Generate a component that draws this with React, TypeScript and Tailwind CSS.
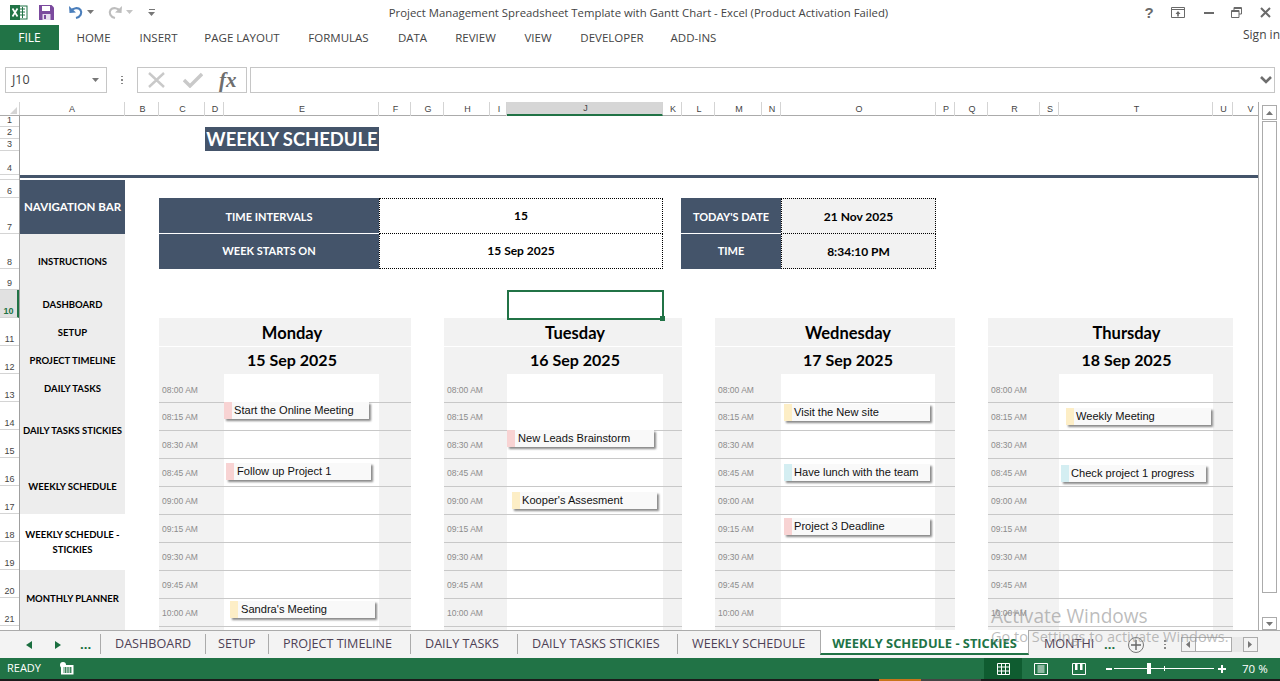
const COLS =
  "grid grid-cols-[105px_34px_46px_19px_155px_32px_33px_46px_17px_156px_19px_33px_47px_19px_155px_19px_33px_52px_19px_154px_20px_25px]";
const ROWS = "grid-rows-[11px_12px_12px_24px_5px_18px_36px_35px_21px_repeat(13,28px)]";

const columnLetters = "ABCDEFGHIJKLMNOPQRSTUV".split("");
const rowNumbers = Array.from({ length: 22 }, (_, i) => i + 1);
const times = [
  "08:00 AM", "08:15 AM", "08:30 AM", "08:45 AM", "09:00 AM",
  "09:15 AM", "09:30 AM", "09:45 AM", "10:00 AM", "10:15 AM",
];

const ribbonTabs = [
  { label: "HOME", cls: "w-[65px]" },
  { label: "INSERT", cls: "w-[65px]" },
  { label: "PAGE LAYOUT", cls: "w-[102px]" },
  { label: "FORMULAS", cls: "w-[91px]" },
  { label: "DATA", cls: "w-[57px]" },
  { label: "REVIEW", cls: "w-[69px]" },
  { label: "VIEW", cls: "w-[56px]" },
  { label: "DEVELOPER", cls: "w-[92px]" },
  { label: "ADD-INS", cls: "w-[71px]" },
];

const sheetTabs = [
  { label: "DASHBOARD", cls: "w-[105px] pl-[14px]" },
  { label: "SETUP", cls: "w-[63px] pl-[12px]" },
  { label: "PROJECT TIMELINE", cls: "w-[142px] pl-[14px]" },
  { label: "DAILY TASKS", cls: "w-[107px] pl-[14px]" },
  { label: "DAILY TASKS STICKIES", cls: "w-[160px] pl-[14px]" },
  { label: "WEEKLY SCHEDULE", cls: "w-[143px] pl-[14px]" },
];

const navItems = [
  { label: "INSTRUCTIONS", cls: "row-[8/10] bg-[#ededed]" },
  { label: "DASHBOARD", cls: "row-[10/11] bg-[#ededed] pt-[2px]" },
  { label: "SETUP", cls: "row-[11/12] bg-[#ededed] pt-[2px]" },
  { label: "PROJECT TIMELINE", cls: "row-[12/13] bg-[#ededed] pt-[2px]" },
  { label: "DAILY TASKS", cls: "row-[13/14] bg-[#ededed] pt-[2px]" },
  { label: "DAILY TASKS STICKIES", cls: "row-[14/16] bg-[#ededed] pt-[2px]" },
  { label: "WEEKLY SCHEDULE", cls: "row-[16/18] bg-[#ededed] pt-[2px]" },
  { label: "WEEKLY SCHEDULE - STICKIES", cls: "row-[18/20] bg-white leading-[15px] px-[4px]" },
  { label: "MONTHLY PLANNER", cls: "row-[20/22] bg-[#ededed] pt-[2px]" },
];

const PINK = "bg-[#f8d3d3]";
const YELLOW = "bg-[#fdeec6]";
const TEAL = "bg-[#d4eef2]";

const days = [
  {
    name: "Monday", date: "15 Sep 2025", place: "col-[3/7]", head: "pl-[14px]", gutter: "w-[65px]", body: "w-[155px]",
    notes: [
      { text: "Start the Online Meeting", pos: "left-[65px] top-[28px] w-[145px]", color: PINK, pad: "pl-[2px]" },
      { text: "Follow up Project 1", pos: "left-[67px] top-[89px] w-[145px]", color: PINK, pad: "pl-[3px]" },
      { text: "Sandra's Meeting", pos: "left-[71px] top-[227px] w-[145px]", color: YELLOW, pad: "pl-[3px]" },
    ],
  },
  {
    name: "Tuesday", date: "16 Sep 2025", place: "col-[8/12]", head: "pl-[24px]", gutter: "w-[63px]", body: "w-[156px]",
    notes: [
      { text: "New Leads Brainstorm", pos: "left-[63px] top-[56px] w-[147px]", color: PINK, pad: "pl-[3px]" },
      { text: "Kooper's Assesment", pos: "left-[68px] top-[118px] w-[145px]", color: YELLOW, pad: "pl-[2px]" },
    ],
  },
  {
    name: "Wednesday", date: "17 Sep 2025", place: "col-[13/17]", head: "pl-[26px]", gutter: "w-[66px]", body: "w-[154px]",
    notes: [
      { text: "Visit the New site", pos: "left-[69px] top-[30px] w-[146px]", color: YELLOW, pad: "pl-[2px]" },
      { text: "Have lunch with the team", pos: "left-[69px] top-[90px] w-[146px]", color: TEAL, pad: "pl-[2px]" },
      { text: "Project 3 Deadline", pos: "left-[69px] top-[144px] w-[146px]", color: PINK, pad: "pl-[2px]" },
    ],
  },
  {
    name: "Thursday", date: "18 Sep 2025", place: "col-[18/22]", head: "pl-[32px]", gutter: "w-[71px]", body: "w-[154px]",
    notes: [
      { text: "Weekly Meeting", pos: "left-[78px] top-[34px] w-[145px]", color: YELLOW, pad: "pl-[2px]" },
      { text: "Check project 1 progress", pos: "left-[73px] top-[91px] w-[145px]", color: TEAL, pad: "pl-[2px]" },
    ],
  },
];

const ExcelLogo = () => (
  <svg width="18" height="17" viewBox="0 0 18 17">
    <rect x="8" y="2" width="9" height="13" fill="#fff" stroke="#217346" />
    <path d="M10 5h5M10 8h5M10 11h5M12.5 3v11" stroke="#217346" strokeWidth="1" />
    <rect x="0" y="1" width="10" height="15" fill="#217346" />
    <path d="M2.5 4.5 L7.5 12.5 M7.5 4.5 L2.5 12.5" stroke="#fff" strokeWidth="1.7" />
  </svg>
);

const SaveIcon = () => (
  <svg width="15" height="15" viewBox="0 0 15 15">
    <path d="M0 0h12.5L15 2.5V15H0z" fill="#7b4a9e" />
    <rect x="3" y="1" width="8" height="5" fill="#fff" />
    <rect x="3.5" y="9" width="8" height="6" fill="#e6dcee" />
    <rect x="5" y="10" width="2" height="4" fill="#7b4a9e" />
  </svg>
);

const Undo = ({ color, flip }: { color: string; flip?: boolean }) => (
  <svg width="16" height="15" viewBox="0 0 16 15" className={flip ? "-scale-x-100" : ""}>
    <path d="M3 6 C5 3 10 2 12.5 5 C14.5 8 12.5 12 8 13" fill="none" stroke={color} strokeWidth="2.2" />
    <path d="M1 1 L1.5 8 L8 7.5 z" fill={color} />
  </svg>
);

const Caret = ({ color = "#777" }: { color?: string }) => (
  <svg width="7" height="4" viewBox="0 0 7 4">
    <path d="M0 0h7L3.5 4z" fill={color} />
  </svg>
);

const WindowButtons = () => (
  <div className="flex items-center text-[#6a6a6a]">
    <span className="w-[14px] text-center text-[15px] font-bold leading-none font-['Liberation_Sans',sans-serif]">?</span>
    <svg width="14" height="11" viewBox="0 0 14 11" className="ml-[15px]">
      <path d="M.5.5h13v10H.5z M.5 2.5h13" fill="none" stroke="#6a6a6a" />
      <path d="M7 4 L4.5 7h1.7v2.5h1.6V7h1.7z" fill="#6a6a6a" />
    </svg>
    <div className="ml-[19px] h-[2px] w-[10px] bg-[#6a6a6a]" />
    <svg width="11" height="11" viewBox="0 0 11 11" className="ml-[17px]">
      <path d="M3 3V.5h7.5V7H8 M.5 3.5H8v7H.5z M.5 4.5H8 M3 1.5h7.5" fill="none" stroke="#6a6a6a" />
    </svg>
    <svg width="11" height="11" viewBox="0 0 11 11" className="ml-[18px]">
      <path d="M1 1l9 9M10 1l-9 9" stroke="#6a6a6a" strokeWidth="2" />
    </svg>
  </div>
);

const TitleBar = () => (
  <div className="relative flex h-[25px] items-center pl-[10px]">
    <ExcelLogo />
    <div className="ml-[11px]"><SaveIcon /></div>
    <div className="ml-[14px]"><Undo color="#4a7ebb" /></div>
    <div className="ml-[3px] mb-[2px]"><Caret /></div>
    <div className="ml-[13px]"><Undo color="#bdbdbd" flip /></div>
    <div className="ml-[3px] mb-[2px]"><Caret color="#c4c4c4" /></div>
    <div className="ml-[15px] flex flex-col items-center gap-[2px]">
      <div className="h-[1px] w-[6px] bg-[#777]" />
      <Caret />
    </div>
    <div className="ml-[233px] w-[501px] whitespace-nowrap text-center text-[11.35px] text-[#444]">
      Project Management Spreadsheet Template with Gantt Chart - Excel (Product Activation Failed)
    </div>
    <div className="ml-auto pr-[9px]"><WindowButtons /></div>
  </div>
);

const RibbonTabs = () => (
  <div className="flex h-[25px] items-center">
    <div className="mr-[2px] flex h-full w-[59px] items-center justify-center bg-[#217346] text-[12px] text-white">FILE</div>
    {ribbonTabs.map((t) => (
      <div key={t.label} className={`${t.cls} whitespace-nowrap text-center text-[11.5px] text-[#444]`}>{t.label}</div>
    ))}
    <div className="ml-auto pb-[6px] text-[12px] text-[#444]">Sign in</div>
  </div>
);

const FormulaBar = () => (
  <div className="mt-[17px] flex h-[26px] pl-[5px] pr-[5px]">
    <div className="flex w-[102px] items-center justify-between border border-[#c6c6c6] pl-[6px] pr-[7px] text-[12.5px] text-[#444]">
      J10
      <Caret color="#777" />
    </div>
    <div className="flex w-[30px] items-center justify-center text-[#999]">
      <div className="flex flex-col gap-[2px]">
        <div className="size-[1.5px] bg-[#888]" />
        <div className="size-[1.5px] bg-[#888]" />
        <div className="size-[1.5px] bg-[#888]" />
      </div>
    </div>
    <div className="flex w-[110px] items-center border border-[#c6c6c6] pl-[10px]">
      <svg width="17" height="16" viewBox="0 0 17 16">
        <path d="M1 1l15 14M16 1L1 15" stroke="#c9c9c9" strokeWidth="2.4" />
      </svg>
      <svg width="20" height="16" viewBox="0 0 20 16" className="ml-[18px]">
        <path d="M1 8l6 6L19 2" fill="none" stroke="#c9c9c9" strokeWidth="3.4" />
      </svg>
      <span className="ml-[16px] font-['Liberation_Serif',serif] text-[21px] font-bold italic leading-none text-[#6e6e6e]">fx</span>
    </div>
    <div className="ml-[3px] flex flex-1 items-center justify-end border border-[#c6c6c6] pr-[2px]">
      <svg width="12" height="8" viewBox="0 0 12 8">
        <path d="M1 1l5 5 5-5" fill="none" stroke="#6e6e6e" strokeWidth="2.6" />
      </svg>
    </div>
  </div>
);

const ColumnHeader = () => (
  <div className="flex h-[14px] border-b border-[#ababab]">
    <div className="relative w-[20px] border-r border-[#d4d4d4]">
      <svg width="7" height="7" viewBox="0 0 7 7" className="absolute bottom-[1px] right-[2px]">
        <path d="M7 0v7H0z" fill="#d4d4d4" />
      </svg>
    </div>
    <div className={`${COLS} flex-1`}>
      {columnLetters.map((c) => (
        <div
          key={c}
          className={`flex items-center justify-center border-r border-[#d4d4d4] text-[9px] leading-none text-[#444] font-['Liberation_Sans',sans-serif] ${
            c === "A" ? "" : c === "V" ? "pl-[10px]" : "pl-[2px]"
          } ${c === "V" ? "border-r-0" : ""} ${c === "J" ? "h-[14px] border-b-2 border-b-[#217346] bg-[#d6d6d6]" : ""}`}
        >
          {c}
        </div>
      ))}
    </div>
  </div>
);

const RowHeader = () => (
  <div className={`grid w-[20px] shrink-0 ${ROWS} border-r border-[#9f9f9f] font-['Liberation_Sans',sans-serif]`}>
    {rowNumbers.map((n) => (
      <div
        key={n}
        className={`flex items-end justify-center border-b border-[#d4d4d4] text-[9px] leading-[11px] ${
          n === 5 ? "overflow-hidden text-transparent" : "text-[#444]"
        } ${n === 10 ? "border-r-2 border-r-[#217346] bg-[#e1e1e1] font-bold text-[#217346]" : ""}`}
      >
        {n}
      </div>
    ))}
  </div>
);

const Sticky = ({ note }: { note: (typeof days)[number]["notes"][number] }) => (
  <div className={`absolute ${note.pos} flex h-[17px] items-center bg-[#f9f9f9] shadow-[2px_2px_2px_#8a8a8a]`}>
    <div className={`h-full w-[8px] shrink-0 ${note.color}`} />
    <span className={`${note.pad} whitespace-nowrap font-['Liberation_Sans',sans-serif] text-[11.1px] text-[#111]`}>{note.text}</span>
  </div>
);

const DayColumn = ({ day }: { day: (typeof days)[number] }) => (
  <div className={`${day.place} row-[11/23] flex flex-col font-['Lato',sans-serif]`}>
    <div className={`${day.head} flex h-[28px] shrink-0 items-center justify-center bg-[#f2f2f2] pt-[3px] text-[16.5px] font-bold text-black`}>{day.name}</div>
    <div className={`${day.head} flex h-[28px] shrink-0 items-center justify-center border-t border-white bg-[#f2f2f2] pb-[2px] text-[16px] font-bold text-black`}>{day.date}</div>
    <div className="relative">
      {times.map((t, i) => (
        <div key={t} className={`flex h-[28px] bg-[#f2f2f2] ${i > 0 ? "border-t border-[#c8c8c8]" : ""}`}>
          <div className={`${day.gutter} ${i > 0 ? "pt-[2px]" : "pt-[4px]"} flex items-center pl-[3px] font-['Liberation_Sans',sans-serif] text-[8.5px] text-[#8c8c8c]`}>{t}</div>
          <div className={`${day.body} bg-white`} />
        </div>
      ))}
      {day.notes.map((n) => (
        <Sticky key={n.text} note={n} />
      ))}
    </div>
  </div>
);

const labelCell = "flex items-center justify-center whitespace-nowrap bg-[#44546a] text-[11px] font-bold text-white";
const valueCell = "flex items-center justify-center border-black border-dotted text-[12px] font-bold text-black";

const SheetBody = () => (
  <div className={`${COLS} ${ROWS} relative flex-1 bg-white font-['Lato',sans-serif]`}>
    <div className="col-[4/6] row-[2/4] flex items-center justify-center whitespace-nowrap bg-[#44546a] text-[18.4px] font-bold leading-none text-white">WEEKLY SCHEDULE</div>
    <div className="col-[1/-1] row-[5/6] h-[3px] bg-[#44546a]" />

    <div className="col-[1/2] row-[6/8] flex items-center justify-center whitespace-nowrap bg-[#44546a] pb-[1px] text-[11.5px] font-bold text-white">NAVIGATION BAR</div>
    {navItems.map((n) => (
      <div key={n.label} className={`col-[1/2] ${n.cls} flex items-center justify-center text-center text-[9.5px] font-bold text-black`}>{n.label}</div>
    ))}
    <div className="col-[1/2] row-[22/23] bg-[#ededed]" />

    <div className={`col-[3/6] row-[7/8] mb-[1px] pt-[3px] ${labelCell}`}>TIME INTERVALS</div>
    <div className={`col-[3/6] row-[8/9] ${labelCell} pb-[1px]`}>WEEK STARTS ON</div>
    <div className={`col-[6/11] row-[7/8] border ${valueCell}`}>15</div>
    <div className={`col-[6/11] row-[8/9] border-x border-b ${valueCell}`}>15 Sep 2025</div>

    <div className={`col-[12/15] row-[7/8] -ml-[1px] mb-[1px] pt-[3px] ${labelCell}`}>TODAY'S DATE</div>
    <div className={`col-[12/15] row-[8/9] -ml-[1px] ${labelCell}`}>TIME</div>
    <div className={`col-[15/16] row-[7/8] border bg-[#f2f2f2] pt-[1px] ${valueCell}`}>21 Nov 2025</div>
    <div className={`col-[15/16] row-[8/9] border-x border-b bg-[#f2f2f2] pt-[1px] ${valueCell}`}>8:34:10 PM</div>

    {days.map((d) => (
      <DayColumn key={d.name} day={d} />
    ))}

    <div className="relative col-[10/11] row-[10/11] z-10 -mr-[1px] -mb-[2px] border-2 border-[#217346]">
      <div className="absolute -bottom-[3px] -right-[3px] size-[5px] bg-[#217346]" />
    </div>
  </div>
);

const VerticalScroll = () => (
  <div className="flex w-[21px] flex-col pl-[3px] pr-[3px] pt-[3px]">
    <div className="flex h-[15px] items-center justify-center border border-[#ababab]">
      <svg width="7" height="4" viewBox="0 0 7 4"><path d="M0 4h7L3.5 0z" fill="#777" /></svg>
    </div>
    <div className="mt-[1px] h-[472px] border border-[#ababab]" />
    <div className="mt-auto flex h-[13px] items-center justify-center border border-[#ababab]">
      <Caret />
    </div>
  </div>
);

const SheetTabs = () => (
  <div className="flex h-[28px] bg-[#f3f3f3] text-[12.6px] text-[#4e4155]">
    <div className="flex w-[100px] items-center border-t border-[#ababab] pl-[26px] text-[#0e6b38]">
      <svg width="6" height="8" viewBox="0 0 6 8"><path d="M6 0v8L0 4z" fill="#1a6e3f" /></svg>
      <svg width="6" height="8" viewBox="0 0 6 8" className="ml-[23px]"><path d="M0 0v8l6-4z" fill="#1a6e3f" /></svg>
      <span className="ml-[19px] text-[13px] font-bold leading-none">...</span>
    </div>
    {sheetTabs.map((t) => (
      <div key={t.label} className="border-t border-[#ababab]">
        <div className={`${t.cls} mt-[3px] flex h-[20px] items-center whitespace-nowrap border-l border-[#ababab]`}>{t.label}</div>
      </div>
    ))}
    <div className="flex h-[25px] w-[209px] items-center justify-center whitespace-nowrap border-x border-b-2 border-x-[#ababab] border-b-[#217346] bg-white pt-[4px] text-[12.85px] font-bold text-[#217346]">
      WEEKLY SCHEDULE - STICKIES
    </div>
    <div className="flex flex-1 items-center border-t border-[#ababab] pl-[15px]">
      <span className="w-[52px] overflow-hidden whitespace-nowrap">MONTHI</span>
      <span className="ml-[8px] w-[12px] text-[13px] font-bold leading-none text-[#1a6e3f]">...</span>
      <div className="ml-[12px] flex size-[16px] items-center justify-center rounded-full border border-[#777]">
        <svg width="10" height="10" viewBox="0 0 10 10"><path d="M5 0v10M0 5h10" stroke="#666" strokeWidth="1.4" /></svg>
      </div>
      <div className="ml-[20px] flex flex-col gap-[2px]">
        <div className="size-[1.5px] bg-[#888]" />
        <div className="size-[1.5px] bg-[#888]" />
        <div className="size-[1.5px] bg-[#888]" />
      </div>
      <div className="ml-[15px] flex h-[15px] w-[77px] items-stretch bg-[#e8e8e8]">
        <div className="flex w-[15px] items-center justify-center border border-[#ababab] bg-[#f3f3f3]">
          <svg width="4" height="7" viewBox="0 0 4 7"><path d="M4 0v7L0 3.5z" fill="#777" /></svg>
        </div>
        <div className="w-[36px] border-y border-r border-[#ababab] bg-white" />
        <div className="ml-auto flex w-[15px] items-center justify-center border border-[#ababab] bg-[#f3f3f3]">
          <svg width="4" height="7" viewBox="0 0 4 7"><path d="M0 0v7l4-3.5z" fill="#777" /></svg>
        </div>
      </div>
    </div>
  </div>
);

const StatusBar = () => (
  <div className="flex h-[21px] items-center bg-[#217346] pl-[7px] text-[11px] text-white">
    <span className="w-[53px]">READY</span>
    <svg width="14" height="13" viewBox="0 0 14 13">
      <circle cx="3" cy="3" r="3" fill="#fff" />
      <rect x="1" y="3" width="12.5" height="9.5" fill="#fff" />
      <path d="M3 6h9M3 8h9M3 10h9M5.5 5v6M8 5v6M10.5 5v6" stroke="#217346" strokeWidth=".8" />
    </svg>
    <div className="ml-auto flex h-full items-center">
      <div className="flex h-full w-[38px] items-center justify-center bg-[#0f5c30]">
        <svg width="13" height="12" viewBox="0 0 13 12">
          <path d="M.5.5h12v11H.5z M.5 4h12M.5 8h12M4.5.5v11M8.5.5v11" fill="none" stroke="#fff" />
        </svg>
      </div>
      <div className="flex h-full w-[38px] items-center justify-center">
        <svg width="14" height="12" viewBox="0 0 14 12">
          <path d="M.5.5h13v11H.5z M3.5 3h7M3.5 5h7M3.5 7h7M3.5 9h7" fill="none" stroke="#fff" />
        </svg>
      </div>
      <div className="flex h-full w-[38px] items-center justify-center">
        <svg width="14" height="12" viewBox="0 0 14 12">
          <path d="M.5.5h13v11H.5z" fill="none" stroke="#fff" />
          <rect x="3" y="0" width="2.5" height="7" fill="#fff" />
          <rect x="8" y="0" width="2.5" height="7" fill="#fff" />
        </svg>
      </div>
      <div className="ml-[8px] h-[2px] w-[6px] bg-white" />
      <div className="relative ml-[2px] h-[1px] w-[100px] bg-white">
        <div className="absolute -top-[5px] left-[33px] h-[11px] w-[4px] bg-white" />
        <div className="absolute -top-[2px] left-[50px] h-[5px] w-[1px] bg-white" />
      </div>
      <svg width="8" height="8" viewBox="0 0 8 8" className="ml-[4px]"><path d="M4 0v8M0 4h8" stroke="#fff" strokeWidth="2" /></svg>
      <span className="ml-[16px] w-[38px] text-[11.5px]">70 %</span>
    </div>
  </div>
);

const App = () => {
  return (
    <div className="relative flex h-[681px] w-[1280px] flex-col overflow-hidden bg-white font-['Open_Sans',sans-serif]">
      <TitleBar />
      <RibbonTabs />
      <FormulaBar />
      <div className="mt-[9px] flex h-[528px] overflow-hidden">
        <div className="flex w-[1259px] flex-col border-r border-[#ababab]">
          <ColumnHeader />
          <div className="flex h-[514px] overflow-hidden">
            <RowHeader />
            <SheetBody />
          </div>
        </div>
        <VerticalScroll />
      </div>
      <SheetTabs />
      <StatusBar />
      <div className="flex h-[2px] bg-[#1b1b1b]">
        <div className="ml-[879px] w-[42px] bg-[#c8741a]" />
        <div className="w-[60px] bg-[#444]" />
      </div>
      <div className="pointer-events-none absolute left-[991px] top-[603px] text-[#8f8f8f]/60">
        <div className="text-[19.1px] leading-[26px]">Activate Windows</div>
        <div className="-mt-[1px] whitespace-nowrap text-[14.5px] leading-[18px]">Go to Settings to activate Windows.</div>
      </div>
    </div>
  );
};

export default App;
